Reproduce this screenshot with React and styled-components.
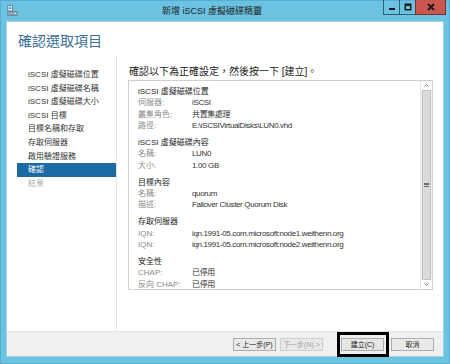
import React from "react";
import styled, { createGlobalStyle } from "styled-components";

const GlobalStyle = createGlobalStyle`
  html, body {
    margin: 0;
    padding: 0;
    background: #ffffff;
  }
  body {
    font-family: "Liberation Sans", "Noto Sans CJK TC", sans-serif;
  }
`;

const navItems = [
  "iSCSI 虛擬磁碟位置",
  "iSCSI 虛擬磁碟名稱",
  "iSCSI 虛擬磁碟大小",
  "iSCSI 目標",
  "目標名稱和存取",
  "存取伺服器",
  "啟用驗證服務",
  "確認",
  "結果",
];

const sections = [
  {
    title: "iSCSI 虛擬磁碟位置",
    rows: [
      ["伺服器:", "iSCSI"],
      ["叢集角色:", "共置集處理"],
      ["路徑:", "E:\\iSCSIVirtualDisks\\LUN0.vhd"],
    ],
  },
  {
    title: "iSCSI 虛擬磁碟內容",
    rows: [
      ["名稱:", "LUN0"],
      ["大小:", "1.00 GB"],
    ],
  },
  {
    title: "目標內容",
    rows: [
      ["名稱:", "quorum"],
      ["描述:", "Failover Cluster Quorum Disk"],
    ],
  },
  {
    title: "存取伺服器",
    rows: [
      ["IQN:", "iqn.1991-05.com.microsoft:node1.weithenn.org"],
      ["IQN:", "iqn.1991-05.com.microsoft:node2.weithenn.org"],
    ],
  },
  {
    title: "安全性",
    rows: [
      ["CHAP:", "已停用"],
      ["反向 CHAP:", "已停用"],
    ],
  },
];

const App = () => {
  return (
    <>
      <GlobalStyle />
      <Window>
        <TitleBar>
          <AppIcon viewBox="0 0 12 12">
            <rect x="1" y="0.5" width="5" height="6" fill="#ffffff" stroke="#3d6f96" strokeWidth="0.8" />
            <rect x="2" y="2" width="3" height="0.8" fill="#3d6f96" />
            <rect x="2" y="3.6" width="3" height="0.8" fill="#3d6f96" />
            <rect x="0.5" y="7" width="11" height="4.5" rx="0.8" fill="#8fa3b3" stroke="#4f6475" strokeWidth="0.6" />
            <rect x="8" y="8.6" width="2" height="1.2" fill="#d8e6f0" />
          </AppIcon>
          <Title>新增 iSCSI 虛擬磁碟精靈</Title>
          <Controls>
            <CtrlButton>
              <svg width="8" height="8" viewBox="0 0 8 8">
                <rect x="1" y="5" width="6" height="2" fill="#1a1a1a" />
              </svg>
            </CtrlButton>
            <CtrlButton>
              <svg width="8" height="8" viewBox="0 0 8 8">
                <rect x="1.25" y="1.25" width="5.5" height="5.5" fill="none" stroke="#1a1a1a" strokeWidth="1.5" />
                <rect x="1" y="1" width="6" height="2" fill="#1a1a1a" />
              </svg>
            </CtrlButton>
            <CloseButton>
              <svg width="8" height="8" viewBox="0 0 8 8">
                <path d="M1 1 L7 7 M7 1 L1 7" stroke="#1a1a1a" strokeWidth="1.8" />
              </svg>
            </CloseButton>
          </Controls>
        </TitleBar>

        <Client>
          <Heading>確認選取項目</Heading>
          <Body>
            <Nav>
              {navItems.map((item) => (
                <NavItem
                  key={item}
                  $active={item === "確認"}
                  $disabled={item === "結果"}
                >
                  {item}
                </NavItem>
              ))}
            </Nav>
            <Main>
              <Intro>確認以下為正確設定，然後按一下 [建立]。</Intro>
              <SummaryBox>
                <SummaryContent>
                  {sections.map((section) => (
                    <Section key={section.title}>
                      <SectionTitle>{section.title}</SectionTitle>
                      {section.rows.map(([label, value], i) => (
                        <Row key={i}>
                          <Label>{label}</Label>
                          <Value>{value}</Value>
                        </Row>
                      ))}
                    </Section>
                  ))}
                </SummaryContent>
                <ScrollBar>
                  <ArrowBox>
                    <svg width="5" height="3" viewBox="0 0 5 3">
                      <path d="M0.5 2.5 L2.5 0.5 L4.5 2.5" fill="none" stroke="#606060" strokeWidth="0.8" />
                    </svg>
                  </ArrowBox>
                  <Thumb>
                    <Grip />
                  </Thumb>
                  <ArrowBox>
                    <svg width="5" height="3" viewBox="0 0 5 3">
                      <path d="M0.5 0.5 L2.5 2.5 L4.5 0.5" fill="none" stroke="#606060" strokeWidth="0.8" />
                    </svg>
                  </ArrowBox>
                </ScrollBar>
              </SummaryBox>
            </Main>
          </Body>
          <Footer>
            <Button $gap={4}>&lt; 上一步(P)</Button>
            <Button $gap={14} $disabled>下一步(N) &gt;</Button>
            <FocusFrame>
              <Button $primary>建立(C)</Button>
            </FocusFrame>
            <Button>取消</Button>
          </Footer>
        </Client>
      </Window>
    </>
  );
};

const Window = styled.div`
  width: 450px;
  height: 364px;
  box-sizing: border-box;
  display: flex;
  flex-direction: column;
  background: #6cc2e1;
  border: 1px solid #55aed3;
  padding: 0 5px 6px 5px;
`;

const TitleBar = styled.div`
  height: 20px;
  display: flex;
  align-items: flex-start;
`;

const AppIcon = styled.svg`
  width: 11px;
  height: 11px;
  margin: 4px 0 0 1px;
`;

const Title = styled.div`
  flex: 1;
  text-align: center;
  font-size: 9px;
  line-height: 20px;
  color: #1e1e1e;
  padding-left: 22px;
`;

const Controls = styled.div`
  display: flex;
  height: 15px;
  margin-top: -1px;
  margin-right: -2px;
`;

const CtrlButton = styled.div`
  width: 15px;
  height: 14px;
  display: flex;
  align-items: center;
  justify-content: center;
  border: 1px solid #2f5f77;
  border-top: none;
  margin-left: -1px;
`;

const CloseButton = styled(CtrlButton)`
  width: 29px;
  background: #c9564f;
  border-color: #7a2f2b;
`;

const Client = styled.div`
  flex: 1;
  display: flex;
  flex-direction: column;
  background: #ffffff;
  border: 1px solid #9fd6ec;
  min-height: 0;
`;

const Heading = styled.div`
  font-family: "Noto Sans CJK TC", sans-serif;
  font-size: 14px;
  line-height: 18px;
  color: #3a6e93;
  padding: 9px 0 0 11px;
  height: 34px;
  box-sizing: border-box;
`;

const Body = styled.div`
  flex: 1;
  display: flex;
  min-height: 0;
`;

const Nav = styled.div`
  width: 110px;
  box-sizing: border-box;
  padding: 12px 0 0 10px;
  border-right: 1px solid #e4e4e4;
  display: flex;
  flex-direction: column;
`;

const NavItem = styled.div`
  height: 13.6px;
  line-height: 13.6px;
  font-size: 8px;
  padding-left: 11px;
  white-space: nowrap;
  color: ${(p) => (p.$active ? "#ffffff" : p.$disabled ? "#b0b0b0" : "#333333")};
  background: ${(p) => (p.$active ? "#1c6aa3" : "transparent")};
`;

const Main = styled.div`
  flex: 1;
  display: flex;
  flex-direction: column;
  padding: 0 10px 4px 11px;
  min-width: 0;
`;

const Intro = styled.div`
  font-size: 10px;
  line-height: 12px;
  color: #222222;
  padding: 10px 0 2px 1px;
  white-space: nowrap;
`;

const SummaryBox = styled.div`
  height: 210px;
  box-sizing: border-box;
  border: 1px solid #cfcfcf;
  display: flex;
`;

const SummaryContent = styled.div`
  flex: 1;
  padding: 5px 0 0 9px;
  overflow: hidden;
`;

const Section = styled.div`
  margin-bottom: 5.8px;
`;

const SectionTitle = styled.div`
  font-size: 8px;
  line-height: 11.3px;
  color: #1e1e1e;
  white-space: nowrap;
`;

const Row = styled.div`
  display: flex;
  font-size: 8px;
  line-height: 11.3px;
  white-space: nowrap;
`;

const Label = styled.div`
  width: 54px;
  flex-shrink: 0;
  color: #8a8a8a;
`;

const Value = styled.div`
  color: #333333;
  letter-spacing: -0.35px;
`;

const ScrollBar = styled.div`
  width: 11px;
  display: flex;
  flex-direction: column;
  background: #f0f0f0;
  border-left: 1px solid #e8e8e8;
`;

const ArrowBox = styled.div`
  height: 9px;
  display: flex;
  align-items: center;
  justify-content: center;
  background: #ffffff;
`;

const Thumb = styled.div`
  flex: 1;
  margin: 0 1px;
  background: #dadada;
  border: 1px solid #c2c2c2;
  display: flex;
  align-items: center;
  justify-content: center;
`;

const Grip = styled.div`
  width: 5px;
  height: 4px;
  background: repeating-linear-gradient(
    to bottom,
    #6a6a6a 0,
    #6a6a6a 1px,
    transparent 1px,
    transparent 1.5px
  );
`;

const Footer = styled.div`
  height: 24px;
  flex-shrink: 0;
  background: #f0f0f0;
  border-top: 1px solid #e2e2e2;
  display: flex;
  align-items: center;
  justify-content: flex-end;
  padding-right: 9px;
`;

const Button = styled.div`
  width: 43px;
  height: 13px;
  box-sizing: border-box;
  display: flex;
  align-items: center;
  justify-content: center;
  font-size: 7px;
  white-space: nowrap;
  margin-right: ${(p) => p.$gap || 0}px;
  color: ${(p) => (p.$disabled ? "#a0a0a0" : "#222222")};
  background: ${(p) => (p.$primary ? "#e6e6e6" : "#e9e9e9")};
  border: 1px solid ${(p) => (p.$disabled ? "#cfcfcf" : "#adadad")};
`;

const FocusFrame = styled.div`
  padding: 3px 2px 3px 1px;
  border: 3px solid #000000;
  margin-right: 2px;
`;

export default App;
